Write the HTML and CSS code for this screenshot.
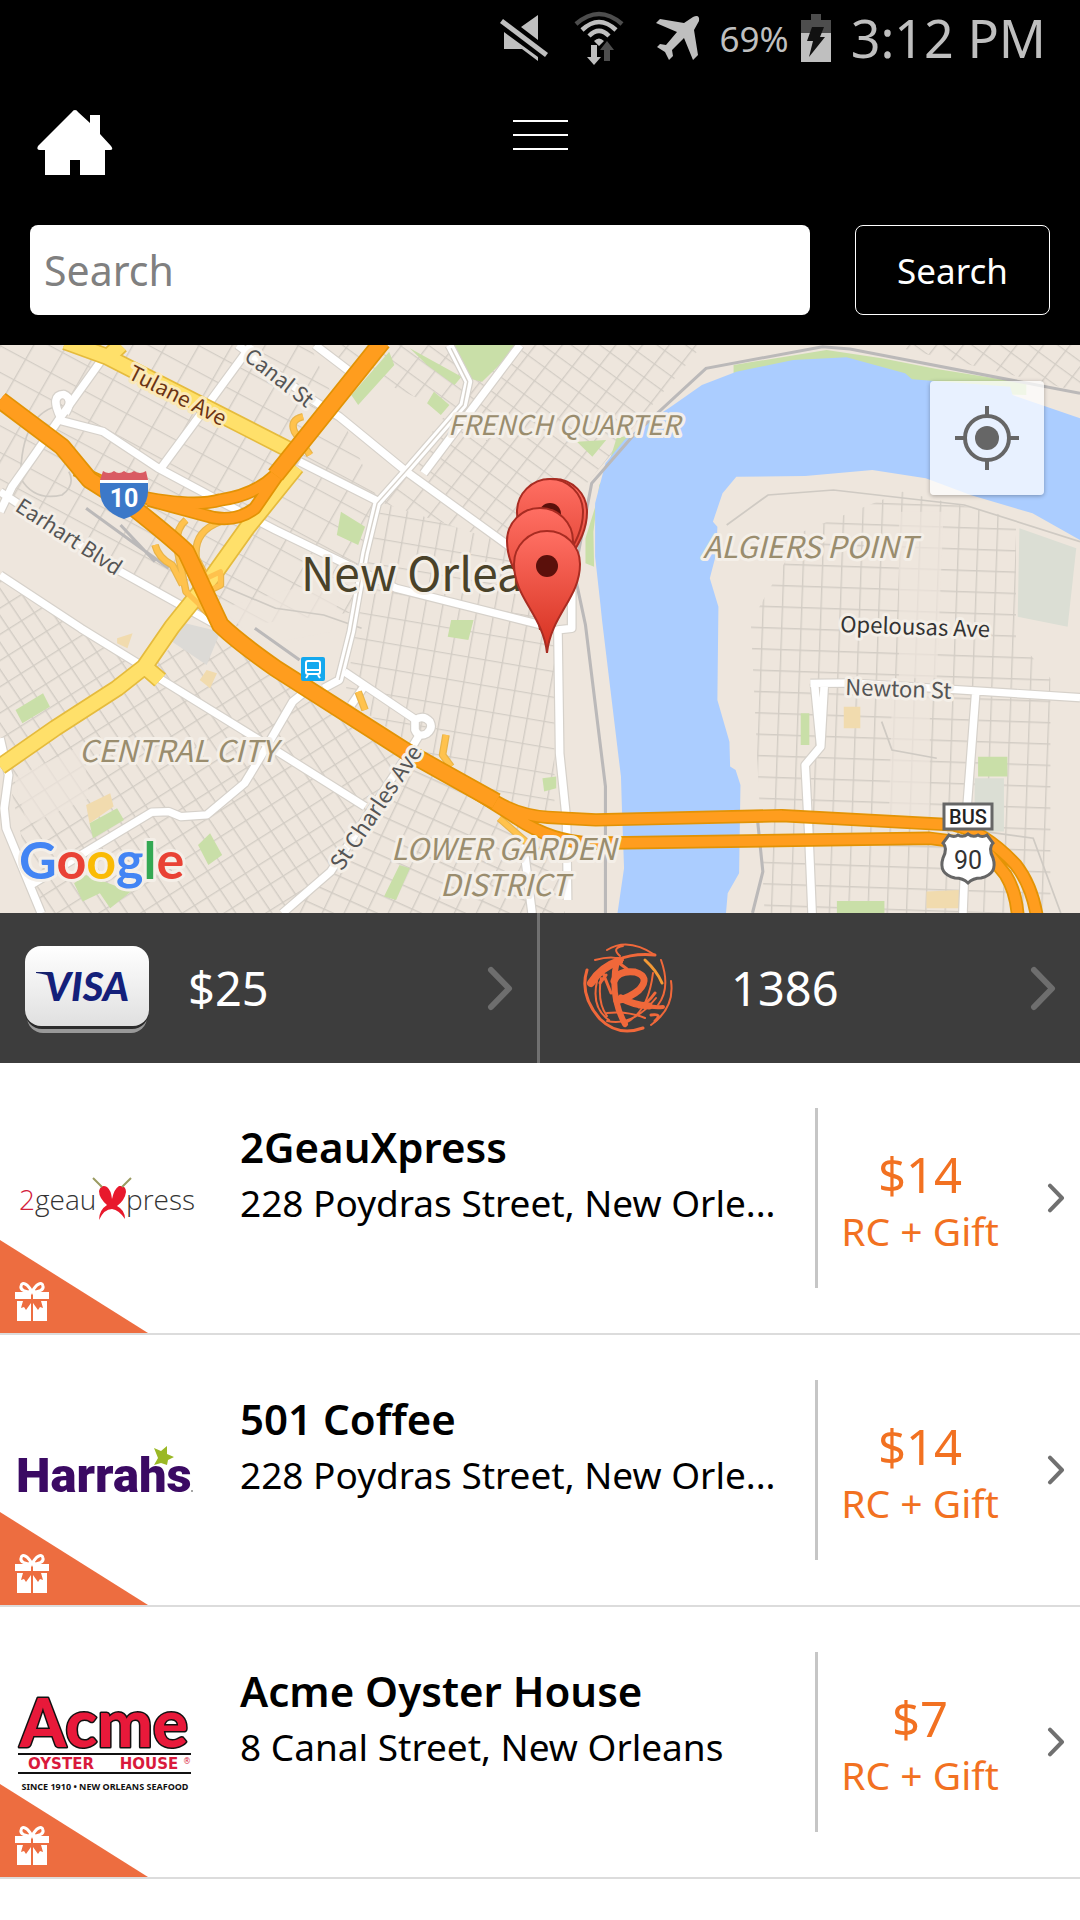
FILE: index.html
```html
<!DOCTYPE html>
<html lang="en">
<head>
<meta charset="utf-8">
<meta name="viewport" content="width=device-width, initial-scale=1">
<title>Nearby offers</title>
<link rel="stylesheet" href="styles.css">
</head>
<body>
<svg class="defs" aria-hidden="true">
  <defs>
    <symbol id="gift" viewBox="0 0 34 40">
      <path fill="none" stroke="#fff" stroke-width="3" d="M17 11C13 3 7 0 6 5c-1 4 4 6 11 6 7 0 12-2 11-6-1-5-7-2-11 6z"/>
      <path fill="#fff" d="M0 11h16v7H0zM18 11h16v7H18zM2 20h6l-2 7 3-1 2 3 5-7v18H2zM32 20h-6l2 7-3-1-2 3-5-7v18h14z"/>
    </symbol>
    <symbol id="chevron" viewBox="0 0 26 45">
      <path fill="none" stroke="currentColor" stroke-width="6" stroke-linecap="round" stroke-linejoin="round" d="M4 4l18 18.500L4 41"/>
    </symbol>
  </defs>
</svg>

<header class="top">
  <div class="status">
    <svg class="ic-mute" viewBox="0 0 48 46" width="48" height="46"><g fill="#bfbfbf"><path d="M38 0v25L21 12zM4 17l34 25v4L22 34H4z"/><path d="M0 8l3-4 45 34-3 4z"/></g></svg>
    <svg class="ic-wifi" viewBox="0 0 50 54" width="50" height="54"><g fill="none" stroke-width="4.500"><path stroke="#4d4d4d" d="M2 13Q25-7 48 13"/><path stroke="#bfbfbf" d="M8 19Q25 3 42 19M15 25Q25 15 35 25"/></g><path fill="#bfbfbf" d="M20 30q5-5 10 0l-5 5zM17 34h6v12h4l-7 8-7-8h4z"/><path fill="#4d4d4d" d="M30 50h6V39h4l-7-9-7 9h4z"/></svg>
    <svg class="ic-plane" viewBox="0 0 44 44" width="44" height="44"><path fill="#bfbfbf" d="M0 7l4-4 24 4 9-6q7-3 6 4l-5 9 4 25-5 5-9-22-12 12 1 6-4 4-4-8-8-5 3-3 6 1 11-13z"/></svg>
    <span class="pct">69%</span>
    <svg class="ic-batt" viewBox="0 0 30 48" width="30" height="48"><path fill="#4d4d4d" d="M10 0h10v6h10v13H0V6h10z"/><path fill="#bfbfbf" d="M0 19h30v29H0z"/><path fill="#111" d="M11 13h12l-4 10h5L8 43l4-16H6z"/></svg>
    <span class="clock">3:12 PM</span>
  </div>
  <nav class="nav">
    <a class="home" href="#" aria-label="Home"><svg viewBox="0 0 75 65" width="75" height="65"><path fill="#fff" d="M38 0q-2 0-3 2L1 36q-2 4 2 4h5v25h25V50h10v15h25V40h5q4 0 1-4L63 24V5H53v8L41 2q-1-2-3-2z"/></svg></a>
    <button class="menu" type="button" aria-label="Menu"><span></span><span></span><span></span></button>
  </nav>
  <form class="search">
    <input type="search" placeholder="Search" aria-label="Search">
    <button type="button">Search</button>
  </form>
</header>

<main>
<section class="map" aria-label="Map">
<svg class="canvas" viewBox="0 0 1080 568" preserveAspectRatio="xMidYMid slice">
  <defs>
    <pattern id="gA" width="84" height="70" patternUnits="userSpaceOnUse" patternTransform="rotate(29)"><path class="minor" d="M0 0H84M0 0V70"/></pattern>
    <pattern id="gB" width="62" height="50" patternUnits="userSpaceOnUse" patternTransform="rotate(37)"><path class="minor" d="M0 0H62M0 0V50"/></pattern>
    <pattern id="gC" width="50" height="76" patternUnits="userSpaceOnUse" patternTransform="rotate(10)"><path class="minor" d="M0 0H50M0 0V76"/></pattern>
    <pattern id="gD" width="66" height="44" patternUnits="userSpaceOnUse" patternTransform="rotate(57)"><path class="minor" d="M0 0H66M0 0V44"/></pattern>
    <pattern id="gE" width="58" height="54" patternUnits="userSpaceOnUse" patternTransform="rotate(25)"><path class="minor" d="M0 0H58M0 0V54"/></pattern>
    <pattern id="gF" width="56" height="64" patternUnits="userSpaceOnUse" patternTransform="rotate(2)"><path class="minor" d="M0 0H56M0 0V64"/></pattern>
    <linearGradient id="pinFill" x1="0" y1="0" x2="0" y2="1"><stop offset="0" stop-color="#ff6f63"/><stop offset="1" stop-color="#d5301f"/></linearGradient>
    <g id="pin"><path fill="url(#pinFill)" stroke="#a82c22" stroke-width="2" d="M0 0C-4-38-33-55-33-89A33 33 0 1 1 33-89C33-55 4-38 0 0z"/><circle cy="-87" r="11" fill="#5b100b"/></g>
    <g id="streets">
      <path d="M690 0L900 160L985 215L1180 380L1480 605M915 0L1010 75M730 0L560 240L460 380M295 45L170 225L100 330L35 425L0 500M170 225L300 260L460 370L650 475L800 555L980 645L1150 730L1610 850M870 350L1100 470M1305 0L1360 110L1345 180L1190 365L1095 475L1060 625L1020 860L985 1005L940 1030M1510 0L1230 385"/>
      <path d="M880 1045L850 1070L760 1230L710 1315L600 1410L525 1415L490 1400L440 1402L90 1620M1000 980L1215 1130M1060 1020L1020 1080M1215 1175L1170 1250L960 1580L820 1705M0 690L235 850L400 955L470 1005L760 1190L1060 1385M0 440L350 680L620 835M0 1180L25 1290L12 1390L18 1450L120 1705M1660 740V850L1620 855L1625 1225L1645 1425L1648 1665M1520 1500L1545 1705"/>
      <path d="M2353 1015L2470 1014L3136 1058M2365 1015L2383 1205L2338 1260L2348 1455L2358 1705M2393 1025L2383 1205M2833 1045L2808 1385L2796 1705M175 215Q145 150 185 148Q215 160 190 205M1205 1125Q1230 1108 1248 1130Q1258 1150 1240 1165Q1215 1180 1205 1155z"/>
    </g>
    <g id="avenues"><path d="M190-10L310 35L860 325M350 0L310 40M860 365L720 545L620 690L500 845L420 965L340 1030L160 1150L0 1265M420 965L465 1005"/></g>
    <g id="ramps"><path d="M880 215Q840 225 855 260L900 330M540 525Q500 560 520 640L540 740L620 820M640 530Q560 560 570 640L600 700L640 680V720L600 740M450 600Q460 640 500 660L530 720M1040 1040L1060 1095M1295 1170L1285 1230L1310 1265M1450 1420L1560 1520"/></g>
    <g id="freeways"><path d="M0 165L180 305L260 405L390 490Q500 580 540 620L640 840Q690 890 800 970L1180 1220L1440 1370Q1510 1412 1590 1417L1730 1425L2270 1412L2770 1440Q2860 1460 2950 1560Q2995 1620 3010 1710M1300 1290L1500 1420Q1600 1490 1720 1495L2700 1480L2850 1500L2920 1590Q2950 1640 2955 1710M1110-10L800 390Q740 450 640 465Q560 490 380 450L220 375M820 370L740 490Q690 530 620 518L430 465"/></g>
  </defs>
  <g transform="scale(.3444 .3333)">
    <path fill="#eee6dd" d="M0 0H3136V1704H0z"/>
    <path fill="url(#gA)" d="M0 0H900L1100 470L1040 800L640 850L0 450z"/>
    <path fill="url(#gB)" d="M900 0H2040L1700 420L1480 600L1100 470L1300 200L1000 60z"/>
    <path fill="url(#gC)" d="M1100 470L1480 600L1610 850V1410L1440 1370L1000 1060z"/>
    <path fill="url(#gD)" d="M0 690L400 955L640 850L1180 1220L960 1580L820 1704H110L25 1300L0 1240z"/>
    <path fill="url(#gE)" d="M1180 1240L1640 1490V1704H830L960 1580z"/>
    <path fill="url(#gF)" d="M2180 830L2330 560L2620 440L2950 520L2950 880L3050 1000V1704H2220z"/>
    <path fill="url(#gB)" d="M2580 0H3136V140z"/>
    <path fill="#eee6dd" d="M2740 500H2610V1000H2720zM2590 1050H2700V1450H2580zM640 790L1000 690L960 860L760 900zM40 1300L240 1200L260 1360L80 1440z" opacity=".7"/>
    <g fill="#c9dfa8">
      <path d="M1130 20L1145 60L1040 180L1020 150zM1190 10L1340 95L1320 120L1240 60zM1310 0H1510L1400 110L1360 100zM1260 140L1305 180L1280 210L1240 175zM990 500L1060 545L1040 600L978 570zM45 1095L125 1045L145 1085L65 1135zM260 1435L340 1390L360 1425L270 1480zM575 1500L610 1465L645 1530L605 1560zM215 1615L250 1590L380 1640L320 1690L290 1645L240 1670zM1160 1560L1190 1570L1150 1665L1115 1655zM1310 825H1375L1360 885L1300 875z"/>
      <path d="M1675 290L1720 335L1760 285zM1723 560L1725 665L1700 655L1700 580L1790 280L1830 270L1740 420zM2325 1105H2350V1200H2325zM2840 1235H2925V1295H2840zM2430 1668H2568V1704H2430zM1575 1300L1615 1295V1330L1580 1340z"/>
    </g>
    <path fill="#dbded4" d="M2960 550L3125 610L3100 845L2955 815zM2830 1300H2915V1460H2830z"/>
    <path fill="#dcdad6" d="M520 830L640 860L600 960L500 890z"/>
    <path fill="#f1dbae" d="M340 880L385 865L370 910L340 895zM600 975L630 985L610 1030L580 1005zM2450 1085H2498V1150H2450zM2690 1640L2785 1635V1690H2690zM250 1380L320 1345L330 1385L260 1435z"/>
    <path fill="#c9dfa8" d="M2130 60L2400 15L2560 40L2720 72L2980 115V150L2650 140L2400 60L2130 100z"/>
    <path fill="#abcdff" d="M1793 1704L1812 1570L1806 1395L1803 1295L1748 825L1743 775L1728 635V475L1743 415L1758 355L1813 285L1868 240L1948 185L2038 120L2138 80L2303 45L2458 37L2628 85L2648 103L2933 125L2940 150L3136 220V585L2998 505L2818 450L2688 400L2533 375L2338 393L2138 395L2098 445L2070 530L2083 545L2080 625L2061 700L2086 785L2083 1065L2118 1190L2120 1265L2136 1275L2150 1320L2146 1585L2113 1645L2108 1704z"/>
    <path fill="none" stroke="#bbb9b9" stroke-width="9" d="M3136 145L2468 12L2388 5L2050 70L1840 270L1718 415L1668 685L1700 840L1758 1325V1704M2200 1430L2215 1580L2185 1704M250 490L490 670M350 540L450 650M740 850L870 945"/>
    <path fill="none" stroke="#cfcac3" stroke-width="5" d="M180 180Q60 200 60 400Q100 470 180 450Q220 420 200 380M3136 590L2800 480L2420 435L2230 450L2110 540M2560 1130L2590 1215L2720 1240M2860 1460L3000 1480L3080 1704M640 720L800 790L940 810L1050 850"/>
    <g fill="none" stroke-linejoin="round">
      <use href="#streets" stroke="#d6d1ca" stroke-width="29"/>
      <use href="#streets" stroke="#fff" stroke-width="22"/>
      <path stroke="#d6d1ca" stroke-width="4" d="M1310 10L1358 110L1345 180L1190 365L1095 475L1060 625L1020 860L985 1005"/>
      <use href="#avenues" stroke="#e5bb3d" stroke-width="52"/>
      <use href="#ramps" stroke="#e8b44a" stroke-width="22"/>
      <use href="#avenues" stroke="#ffe06a" stroke-width="42"/>
      <use href="#ramps" stroke="#ffc24d" stroke-width="15"/>
      <use href="#freeways" stroke="#e29305" stroke-width="40"/>
      <use href="#freeways" stroke="#ff9d1e" stroke-width="30"/>
      <path stroke="#e29305" stroke-width="54" d="M0 165L180 305L260 405L390 490Q500 580 540 620L640 840Q690 890 800 970L1180 1220L1440 1370M1110-10L800 390"/>
      <path stroke="#ff9d1e" stroke-width="44" d="M0 165L180 305L260 405L390 490Q500 580 540 620L640 840Q690 890 800 970L1180 1220L1440 1370M1110-10L800 390"/>
    </g>
  </g>
  <g class="label">
    <text class="road small brown" transform="translate(127 33) rotate(27)">Tulane Ave</text>
    <text class="road small" transform="translate(243 14) rotate(38)">Canal St</text>
    <text class="road small" transform="translate(14 165) rotate(33)">Earhart Blvd</text>
    <text class="road" transform="translate(342 527) rotate(-56)">St Charles Ave</text>
    <text class="road dark" transform="translate(840 287) rotate(2)">Opelousas Ave</text>
    <text class="road" transform="translate(845 350) rotate(2)">Newton St</text>
    <text class="area narrow" x="448" y="90">FRENCH QUARTER</text>
    <text class="area" x="703" y="213">ALGIERS POINT</text>
    <text class="area" x="79" y="417">CENTRAL CITY</text>
    <text class="area" x="391" y="515">LOWER GARDEN</text>
    <text class="area" x="440" y="551">DISTRICT</text>
    <text class="city" x="301" y="246">New Orleans</text>
    <text class="google" x="19" y="534"><tspan fill="#4385f4">G</tspan><tspan fill="#e94235">o</tspan><tspan fill="#fabb05">o</tspan><tspan fill="#4385f4">g</tspan><tspan fill="#34a853">l</tspan><tspan fill="#e94235">e</tspan></text>
  </g>
  <g>
    <path fill="#3c78c8" d="M100 138h48v8q0 20-24 28-24-8-24-28z"/><path fill="#d95b63" d="M103 126q6 4 11 0 5 4 10 0 5 4 10 0 6 4 12 0l2 9h-48z"/><path fill="#fff" d="M100 135h48v3h-48z"/>
    <text class="shield white" x="124" y="162">10</text>
    <rect x="301" y="312" width="24" height="24" rx="2" fill="#14a8ee"/><g fill="none" stroke="#fff" stroke-width="2"><rect x="306" y="316" width="14" height="13" rx="2"/><path d="M307 325h12M308 330l-2 3M318 330l2 3"/></g>
    <rect x="944" y="459" width="48" height="25" fill="#fff" stroke="#666" stroke-width="3"/><text class="bus" x="968" y="479">BUS</text>
    <path fill="#fff" stroke="#666" stroke-width="3" d="M949 490q5 3 9 0 5 3 10-1 5 4 10 1 4 3 9 0l6 8q-5 5 0 15 5 16-12 20-8 0-13 5-5-5-13-5-17-4-12-20 5-10 0-15z"/><text class="shield" x="968" y="524">90</text>
  </g>
  <use href="#pin" x="554" y="256"/><use href="#pin" x="550" y="256"/><use href="#pin" x="540" y="285"/><use href="#pin" x="547" y="308"/>
</svg>
<button class="locate" type="button" aria-label="My location"><svg viewBox="0 0 64 64" width="64" height="64"><g fill="none" stroke="#666" stroke-width="4"><circle cx="32" cy="32" r="22"/><path d="M32 0v10M32 54v10M0 32h10M54 32h10"/></g><circle cx="32" cy="32" r="12" fill="#666"/></svg></button>
</section>

<section class="rewards">
  <a class="visa" href="#">
    <svg viewBox="0 0 124 86" width="124" height="86"><defs><linearGradient id="cardFill" x1="0" y1="0" x2="0" y2="1"><stop offset="0" stop-color="#fff"/><stop offset="1" stop-color="#e0e0e0"/></linearGradient></defs><rect x="2" y="12" width="120" height="76" rx="16" fill="#999"/><rect y="4" width="124" height="80" rx="17" fill="#2c2c2c"/><rect y="1" width="124" height="80" rx="16" fill="url(#cardFill)"/><text class="visa-mark" x="62" y="56">VISA</text><path fill="#17216b" d="M11 27h14l3 6q-6-4-17-5z"/></svg>
    <span>$25</span>
    <svg class="go" width="26" height="45"><use href="#chevron"/></svg>
  </a>
  <a class="points" href="#">
    <svg viewBox="0 0 90 90" width="90" height="90"><g fill="none" stroke="#f0683a" stroke-linecap="round"><path stroke-width="3" d="M4 27Q-4 52 17 76 35 94 60 85"/><path stroke-width="2" d="M88 38Q92 65 68 82M24 7Q45-6 72 12M78 17Q88 45 75 62M12 17Q30 12 40 17M40 3Q28 5 37 13M14 38Q8 65 26 77M18 35Q14 60 24 73M24 70Q45 68 62 75M24 78Q50 84 73 55M70 30Q65 70 42 80"/><path stroke="#f59a35" stroke-width="3" d="M62 17Q74 28 79 40"/><path stroke-width="3" d="M20 30l8 20M17 40l6-8M36 20l8 6M68 72Q80 70 72 78M72 50Q65 60 56 64"/><path stroke-width="6" d="M34 17Q26 52 42 81"/><path stroke-width="3" d="M34 17Q50 10 72 12"/><path stroke-width="8" d="M8 40Q18 24 36 18"/><path stroke-width="7" d="M31 38Q35 27 52 29 68 34 56 47 48 54 34 58M38 55Q50 62 66 63"/><path stroke-width="4" d="M60 62Q70 65 80 64"/></g></svg>
    <span>1386</span>
    <svg class="go" width="26" height="45"><use href="#chevron"/></svg>
  </a>
</section>

<ul class="offers">
  <li><a href="#">
    <span class="logo"><svg viewBox="0 0 180 46" width="180" height="46"><text class="geau" x="4" y="35"><tspan fill="#d3203a">2</tspan>geau</text><text class="geau" x="111" y="35">press</text><g fill="#e8192c"><path d="M84 16q2-7 8-4 4 3 5 12 2-10 7-13 7-1 7 6-1 8-9 14 8 4 8 13-6-9-13-10-8 0-13 11 0-10 8-15-8-7-8-14z"/></g><path fill="none" stroke="#9b9b62" stroke-width="2" d="M78 3l9 9M116 3l-9 9"/></svg></span>
    <span class="info"><strong>2GeauXpress</strong><span>228 Poydras Street, New Orle...</span></span>
    <span class="deal"><b>$14</b><span>RC + Gift</span></span>
    <svg class="next" width="18" height="30"><use href="#chevron"/></svg>
    <span class="ribbon"><svg width="34" height="40"><use href="#gift"/></svg></span>
  </a></li>
  <li><a href="#">
    <span class="logo"><svg viewBox="0 0 180 50" width="180" height="50"><text class="harrahs" x="1" y="47">Harrahs</text><path fill="#9ab825" d="M139 3l7 3 6-5v8l7 3-6 3-1 5-6-2-7 2 4-7z"/><circle cx="177" cy="46" r="1" fill="#888"/></svg></span>
    <span class="info"><strong>501 Coffee</strong><span>228 Poydras Street, New Orle...</span></span>
    <span class="deal"><b>$14</b><span>RC + Gift</span></span>
    <svg class="next" width="18" height="30"><use href="#chevron"/></svg>
    <span class="ribbon"><svg width="34" height="40"><use href="#gift"/></svg></span>
  </a></li>
  <li><a href="#">
    <span class="logo"><svg viewBox="0 0 180 100" width="180" height="100"><text class="acme" x="89" y="55">Acme</text><path fill="#111" d="M3 61h173v2H3zM3 80h173v2H3z"/><text class="oyster" x="46" y="77">OYSTER</text><text class="oyster" x="134" y="77">HOUSE</text><text class="reg" x="168" y="72">®</text><text class="since" x="90" y="98">SINCE 1910 • NEW ORLEANS SEAFOOD</text></svg></span>
    <span class="info"><strong>Acme Oyster House</strong><span>8 Canal Street, New Orleans</span></span>
    <span class="deal"><b>$7</b><span>RC + Gift</span></span>
    <svg class="next" width="18" height="30"><use href="#chevron"/></svg>
    <span class="ribbon"><svg width="34" height="40"><use href="#gift"/></svg></span>
  </a></li>
</ul>
</main>
</body>
</html>
```
FILE: styles.css
```css
* { box-sizing: border-box; }
body { margin: 0; background: #fff; color: #000; font-family: "Noto Sans", "Open Sans", sans-serif; }
a { color: inherit; text-decoration: none; }
button { font-family: inherit; cursor: pointer; }
svg { display: block; flex: none; overflow: visible; }
.defs { position: absolute; width: 0; height: 0; }

/* header */
.top { background: #000; }
.status { display: flex; justify-content: flex-end; align-items: center; height: 76px; padding-right: 34px; color: #bfbfbf; }
.ic-mute { margin-right: 26px; }
.ic-wifi { margin-right: 32px; }
.ic-plane { margin-right: 20px; }
.pct { font-size: 35px; margin-right: 12px; }
.ic-batt { margin-right: 20px; }
.clock { font-size: 52px; line-height: 76px; }
.nav { display: grid; grid-template-columns: 1fr auto 1fr; align-items: start; height: 149px; padding: 34px 37px 0; }
.home { justify-self: start; }
.menu { display: grid; gap: 12px; width: 55px; margin-top: 10px; padding: 0; border: 0; background: none; }
.menu span { height: 2px; background: #fff; }
.search { display: flex; gap: 45px; padding: 0 30px 30px; }
.search input { flex: 1; min-width: 0; height: 90px; padding: 0 14px; border: 0; border-radius: 8px; background: #fff; font-family: inherit; font-size: 41px; }
.search input::placeholder { color: #808080; opacity: 1; }
.search button { width: 195px; height: 90px; border: 1px solid #fff; border-radius: 8px; background: #000; color: #fff; font-size: 35px; }

/* map */
.map { position: relative; overflow: hidden; }
.canvas { width: 100%; height: 568px; overflow: hidden; }
.minor { fill: none; stroke: #d3cdc5; stroke-width: 8; }
.label text { font-family: "Noto Sans CJK JP", "Noto Sans", sans-serif; paint-order: stroke; stroke: #f4efe8; stroke-width: 6px; stroke-linejoin: round; fill: #555; }
.label .road { font-size: 22px; }
.label .small { font-size: 21px; }
.label .brown { fill: #6b3413; stroke: #fbe9b8; }
.label .dark { fill: #333; }
.label .area { font-size: 30px; font-style: italic; fill: #9a8d6e; }
.label .narrow { font-size: 27px; }
.label .city { font-size: 46px; fill: #4a4229; }
.label .google { font-family: Lato, sans-serif; font-size: 52px; font-weight: 700; }
.shield { font: 400 25px Roboto, sans-serif; text-anchor: middle; fill: #333; }
.shield.white { font-weight: 700; fill: #fff; }
.bus { font: 500 20px Roboto, sans-serif; text-anchor: middle; fill: #222; }
.locate { position: absolute; top: 36px; right: 36px; display: grid; place-items: center; width: 114px; height: 114px; padding: 0; border: 0; border-radius: 4px; background: rgba(255, 255, 255, .72); box-shadow: 0 1px 4px rgba(0, 0, 0, .3); }

/* reward balances */
.rewards { display: grid; grid-template-columns: 1fr 1fr; background: #3d3d3d; color: #fff; font-size: 47px; }
.rewards a { display: flex; align-items: center; height: 150px; padding: 0 24px 0 25px; }
.visa { border-right: 3px solid #707070; }
.visa span { margin-left: 39px; }
.points span { margin-left: 58px; }
.rewards .points { padding-left: 43px; }
.go { margin-left: auto; color: #6e6e6e; }
.visa-mark { font: italic 900 40px Lato, sans-serif; text-anchor: middle; fill: #14207a; }

/* offers */
.offers { margin: 0; padding: 0; list-style: none; }
.offers li { border-bottom: 2px solid #dcdcdc; }
.offers a { position: relative; display: grid; grid-template-columns: 240px minmax(0, 1fr) 207px 58px; align-items: center; height: 270px; }
.logo { padding-left: 15px; }
.info { display: grid; align-self: start; padding-top: 54px; white-space: nowrap; }
.info strong { font-size: 42px; font-weight: 600; line-height: 60px; }
.info span { font-size: 37px; line-height: 52px; overflow: hidden; text-overflow: ellipsis; }
.deal { display: grid; align-content: center; height: 180px; border-left: 3px solid #c6c6c6; color: #f27121; text-align: center; padding-top: 8px; }
.deal b { font-size: 49px; font-weight: 400; line-height: 58px; }
.deal span { font-size: 39px; line-height: 56px; }
.next { justify-self: center; margin-left: 10px; color: #707070; }
.ribbon { position: absolute; left: 0; bottom: 0; display: flex; align-items: flex-end; width: 148px; height: 93px; padding: 0 0 12px 15px; background: #ed6d40; clip-path: polygon(0 0, 100% 100%, 0 100%); }
.geau { font: 300 28px "Open Sans", sans-serif; fill: #333; }
.harrahs { font: 900 49px Roboto, sans-serif; fill: #3b0a63; }
.acme { font: 900 66px Lato, sans-serif; text-anchor: middle; fill: #e8193a; stroke: #111; stroke-width: 3px; paint-order: stroke; stroke-linejoin: round; }
.oyster { font: 700 15px "DejaVu Sans", sans-serif; text-anchor: middle; fill: #d91a3c; }
.reg { font: 8px "DejaVu Sans", sans-serif; fill: #d91a3c; }
.since { font: 700 9px "Noto Sans", sans-serif; text-anchor: middle; fill: #111; }
```
